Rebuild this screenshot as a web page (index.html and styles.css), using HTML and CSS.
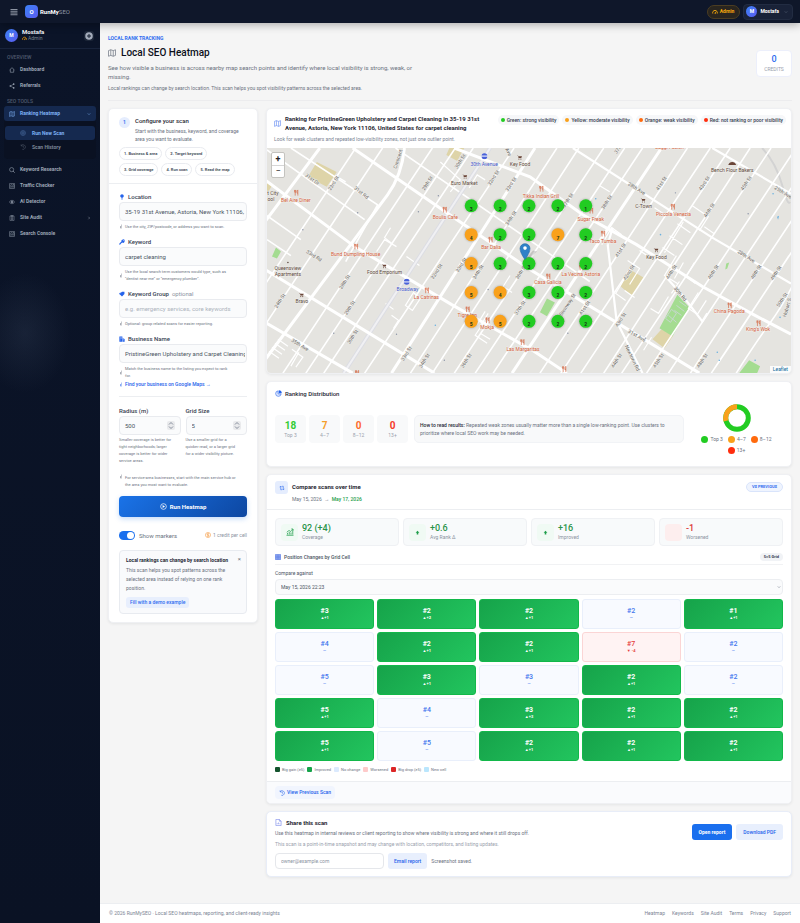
FILE: index.html
```html
<!DOCTYPE html>
<html lang="en">
<head>
<meta charset="utf-8">
<meta name="viewport" content="width=device-width, initial-scale=1">
<title>Local SEO Heatmap - RunMySEO</title>
<link rel="stylesheet" href="styles.css">
</head>
<body>
<svg class="sprite" aria-hidden="true">
  <symbol id="i-map" viewBox="0 0 16 16"><path d="M1 3.2 5.5 1.5l5 1.7L15 1.5v11.300l-4.500 1.700-5-1.700L1 14.500zM5.500 1.500v11.300M10.500 3.200v11.300" fill="none" stroke="currentColor" stroke-width="1.400" stroke-linejoin="round"/></symbol>
  <symbol id="i-home" viewBox="0 0 16 16"><path d="M1.500 8 8 1.800 14.500 8M3.500 6.500V14h9V6.500" fill="none" stroke="currentColor" stroke-width="1.500" stroke-linejoin="round"/></symbol>
  <symbol id="i-share" viewBox="0 0 16 16"><path d="M12 3 4 8l8 5" fill="none" stroke="currentColor" stroke-width="1.300"/><circle cx="12.500" cy="3" r="2.200" fill="currentColor"/><circle cx="3.500" cy="8" r="2.200" fill="currentColor"/><circle cx="12.500" cy="13" r="2.200" fill="currentColor"/></symbol>
  <symbol id="i-search" viewBox="0 0 16 16"><circle cx="7" cy="7" r="5.500" fill="none" stroke="currentColor" stroke-width="1.500"/><path d="m11 11 4 4" stroke="currentColor" stroke-width="2"/></symbol>
  <symbol id="i-chart" viewBox="0 0 16 16"><path d="M1.500 1.500h13v13h-13zM4 12V9m3 3V7m3 5V8m3 4V5M3 7l4-3 3 2 4-4" fill="none" stroke="currentColor" stroke-width="1.300"/></symbol>
  <symbol id="i-eye" viewBox="0 0 16 16"><path d="M1 8s2.500-4.500 7-4.500S15 8 15 8s-2.500 4.500-7 4.500S1 8 1 8z" fill="none" stroke="currentColor" stroke-width="1.400"/><circle cx="8" cy="8" r="2.600" fill="currentColor"/></symbol>
  <symbol id="i-clip" viewBox="0 0 16 16"><path d="M2.500 2.500h11v12h-11zM5.500 1h5v3h-5zM5 7h6M5 9.500h6M5 12h6" fill="none" stroke="currentColor" stroke-width="1.200"/></symbol>
  <symbol id="i-target" viewBox="0 0 16 16"><circle cx="8" cy="8" r="6.500" fill="none" stroke="currentColor" stroke-width="1.300"/><circle cx="8" cy="8" r="3.300" fill="none" stroke="currentColor" stroke-width="1.300"/><circle cx="8" cy="8" r="1.200" fill="currentColor"/></symbol>
  <symbol id="i-history" viewBox="0 0 16 16"><path d="M3 4.500A6.300 6.300 0 1 1 6 14M3 1v4h4M8.500 4.500V8l2.500 2" fill="none" stroke="currentColor" stroke-width="1.500"/></symbol>
  <symbol id="i-gauge" viewBox="0 0 16 16"><path d="M2 12a6.300 6.300 0 1 1 12 0" fill="none" stroke="currentColor" stroke-width="2.400"/><path d="M7 11.500 11 7l-1.800 5.500z" fill="currentColor" stroke="currentColor"/></symbol>
  <symbol id="i-chev" viewBox="0 0 16 16"><path d="m3 5.500 5 5 5-5" fill="none" stroke="currentColor" stroke-width="2"/></symbol>
  <symbol id="i-pin" viewBox="0 0 16 16"><path d="M8 .5a4.800 4.800 0 0 1 1 9.500v5.500H7V10A4.800 4.800 0 0 1 8 .5z" fill="currentColor"/></symbol>
  <symbol id="i-key" viewBox="0 0 16 16"><path d="M10.500 1a4.500 4.500 0 1 1-2 8.500L6.500 11.500H5V13H3.500v2H1v-3l5.500-5.500A4.500 4.500 0 0 1 10.500 1zm1.200 2.200a1.200 1.200 0 1 0 .1 2.400 1.200 1.200 0 0 0-.1-2.400z" fill="currentColor" fill-rule="evenodd"/></symbol>
  <symbol id="i-tag" viewBox="0 0 16 16"><path d="M8 2h6.500v6L8 14.500 1 8zM5 2 0 7l1 1.500z" fill="currentColor"/></symbol>
  <symbol id="i-build" viewBox="0 0 16 16"><path d="M1 1h8v14H1zm2 2v1.500h1.500V3zm3 0v1.500h1.500V3zM3 6.500V8h1.500V6.500zm3 0V8h1.500V6.500zM3 10v1.500h1.500V10zM10 6l5 2v7h-5zm1.500 3.500V11H13V9.500z" fill="currentColor" fill-rule="evenodd"/></symbol>
  <symbol id="i-info" viewBox="0 0 16 16"><path d="M8 1h3v3H8zM5.500 6H10l-1.500 7H11v1.500H5L6.500 7.500h-1z" fill="currentColor"/></symbol>
  <symbol id="i-play" viewBox="0 0 16 16"><circle cx="8" cy="8" r="6.500" fill="none" stroke="currentColor" stroke-width="1.600"/><path d="M6 4.800 11.500 8 6 11.200z" fill="currentColor"/></symbol>
  <symbol id="i-coin" viewBox="0 0 16 16"><circle cx="8" cy="8" r="6.800" fill="none" stroke="currentColor" stroke-width="1.500"/><path d="M10.500 5.500C9 4 5.500 4.500 5.800 6.500S10.500 8 10.300 10 6.500 11.700 5.300 10.300M8 3v10" fill="none" stroke="currentColor" stroke-width="1.500"/></symbol>
  <symbol id="i-pie" viewBox="0 0 16 16"><path d="M7 2a6.300 6.300 0 1 0 7 7H7z" fill="#dfe8fd" stroke="currentColor" stroke-width="1.300"/><path d="M8.500.5a7 7 0 0 1 7 7h-7z" fill="currentColor"/></symbol>
  <symbol id="i-swap" viewBox="0 0 16 16"><path d="M4.500 3v9.500H8M1.500 6l3-3 3 3M11.500 13V3.500H8M8.500 10l3 3 3-3" fill="none" stroke="currentColor" stroke-width="1.700"/></symbol>
  <symbol id="i-up" viewBox="0 0 16 16"><path d="M8 2 14 9h-3.500v5h-5V9H2z" fill="currentColor"/></symbol>
  <symbol id="i-grow" viewBox="0 0 16 16"><path d="M1 14.500h14M3 13v-3m3.500 3V8m3.500 5V9m3.500 4V5M1.500 8.500 6 5l3.500 2L14 2.500M10.500 2H14v3.500" fill="none" stroke="currentColor" stroke-width="1.500"/></symbol>
  <symbol id="i-grid" viewBox="0 0 16 16"><path d="M1 1h14v14H1zM1 5.700h14M1 10.300h14M5.700 1v14M10.300 1v14" fill="#a9bdf6" stroke="currentColor" stroke-width="1.500"/></symbol>
  <symbol id="i-file" viewBox="0 0 16 16"><path d="M2 1h8l4 4v10H2zM10 1v4h4M5 12V9.500m3 2.500V8m3 4v-2" fill="none" stroke="currentColor" stroke-width="1.300"/></symbol>
  <symbol id="m-food" viewBox="0 0 8 10"><path d="M1 0v3.500L2 5v5M2 0v4M3 0v3.500L2 5M6.500 10V0C5 1 5 4 5 5.500h1.500" fill="none" stroke="#d5623d" stroke-width="1.100"/></symbol>
  <symbol id="m-cart" viewBox="0 0 10 10"><path d="M0 1h2l1 5h5.500L10 2.500H2.500z" fill="#6b4638"/><circle cx="3.800" cy="8.300" r="1.100" fill="#6b4638"/><circle cx="7.800" cy="8.300" r="1.100" fill="#6b4638"/></symbol>
  <symbol id="m-sub" viewBox="0 0 10 10"><circle cx="5" cy="5" r="4.500" fill="#4a62d9"/><path d="M0 5h10" stroke="#fff" stroke-width="2.200"/><path d="M1 5h8" stroke="#4a62d9" stroke-width=".9"/></symbol>
</svg>

<header class="topbar">
  <button class="burger" type="button" aria-label="Toggle menu"><svg viewBox="0 0 16 16"><path d="M1 3h14M1 6.500h14M1 10h14M1 13.500h14" stroke="currentColor" stroke-width="1.700"/></svg></button>
  <a class="brand" href="#"><span class="logo">O</span><span><b>RunMy</b>SEO</span></a>
  <a class="admin" href="#"><svg class="ic"><use href="#i-gauge"/></svg>Admin</a>
  <button class="account" type="button"><span class="avatar">M</span><b>Mostafa</b><svg class="ic tiny"><use href="#i-chev"/></svg></button>
</header>

<div class="shell">
  <aside class="sidebar">
    <div class="user">
      <span class="avatar big">M</span>
      <div><strong>Mostafa</strong><small><svg class="ic"><use href="#i-gauge"/></svg>Admin</small></div>
      <button class="add" type="button" aria-label="Add"><svg viewBox="0 0 16 16"><circle cx="8" cy="8" r="7.500" fill="#a3abba"/><path d="M8 4v8M4 8h8" stroke="#172033" stroke-width="2"/></svg></button>
    </div>
    <nav>
      <h2>Overview</h2>
      <a class="item" href="#"><svg class="ic"><use href="#i-home"/></svg>Dashboard</a>
      <a class="item" href="#"><svg class="ic"><use href="#i-share"/></svg>Referrals</a>
      <h2>SEO Tools</h2>
      <a class="item on" href="#"><svg class="ic"><use href="#i-map"/></svg>Ranking Heatmap<svg class="ic tiny end"><use href="#i-chev"/></svg></a>
      <div class="sub">
        <a class="item on" href="#"><svg class="ic"><use href="#i-target"/></svg>Run New Scan</a>
        <a class="item" href="#"><svg class="ic"><use href="#i-history"/></svg>Scan History</a>
      </div>
      <a class="item" href="#"><svg class="ic"><use href="#i-search"/></svg>Keyword Research</a>
      <a class="item" href="#"><svg class="ic"><use href="#i-chart"/></svg>Traffic Checker</a>
      <a class="item" href="#"><svg class="ic"><use href="#i-eye"/></svg>AI Detector</a>
      <a class="item" href="#"><svg class="ic"><use href="#i-clip"/></svg>Site Audit<svg class="ic tiny end side"><use href="#i-chev"/></svg></a>
      <a class="item" href="#"><svg class="ic"><use href="#i-chart"/></svg>Search Console</a>
    </nav>
  </aside>

  <div class="page">
    <main>
      <div class="hero">
        <div class="intro">
          <p class="eyebrow">Local Rank Tracking</p>
          <h1><svg class="ic"><use href="#i-map"/></svg>Local SEO Heatmap</h1>
          <p class="lede">See how visible a business is across nearby map search points and identify where local visibility is strong, weak, or missing.</p>
          <p class="note">Local rankings can change by search location. This scan helps you spot visibility patterns across the selected area.</p>
        </div>
        <div class="credits"><strong>0</strong><span>Credits</span></div>
      </div>

      <div class="cols">
        <form class="card config">
          <div class="chead">
            <div class="step"><span class="num">1</span><div><h2>Configure your scan</h2><p>Start with the business, keyword, and coverage area you want to evaluate.</p></div></div>
            <ol class="chips"><li>1. Business &amp; area</li><li>2. Target keyword</li><li>3. Grid coverage</li><li>4. Run scan</li><li>5. Read the map</li></ol>
          </div>
          <div class="cbody">
            <div class="field">
              <label for="loc"><svg class="ic"><use href="#i-pin"/></svg>Location</label>
              <input id="loc" type="text" value="35-19 31st Avenue, Astoria, New York 11106,">
              <p class="help"><svg class="ic"><use href="#i-info"/></svg><span>Use the city, ZIP/postcode, or address you want to scan.</span></p>
            </div>
            <div class="field">
              <label for="kw"><svg class="ic"><use href="#i-key"/></svg>Keyword</label>
              <input id="kw" type="text" value="carpet cleaning">
              <p class="help"><svg class="ic"><use href="#i-info"/></svg><span>Use the local search term customers would type, such as "dentist near me" or "emergency plumber".</span></p>
            </div>
            <div class="field">
              <label for="kg"><svg class="ic"><use href="#i-tag"/></svg>Keyword Group <i>optional</i></label>
              <input id="kg" type="text" placeholder="e.g. emergency services, core keywords">
              <p class="help"><svg class="ic"><use href="#i-info"/></svg><span>Optional: group related scans for easier reporting.</span></p>
            </div>
            <div class="field last">
              <label for="bn"><svg class="ic"><use href="#i-build"/></svg>Business Name</label>
              <input id="bn" type="text" value="PristineGreen Upholstery and Carpet Cleaning">
              <p class="help"><svg class="ic"><use href="#i-info"/></svg><span>Match the business name to the listing you expect to rank for.</span></p>
              <a class="find" href="#"><svg class="ic"><use href="#i-info"/></svg>Find your business on Google Maps →</a>
            </div>
            <div class="pair">
              <div><label for="rad">Radius (m)</label>
                <div class="numbox"><input id="rad" type="number" value="500"><svg class="spin" viewBox="0 0 8 9"><path d="m2 3.500 2-2 2 2M2 5.500l2 2 2-2" fill="none" stroke="#7b8494" stroke-width=".9"/></svg></div>
                <p>Smaller coverage is better for tight neighborhoods; larger coverage is better for wider service areas.</p></div>
              <div><label for="gs">Grid Size</label>
                <div class="numbox"><input id="gs" type="number" value="5"><svg class="spin" viewBox="0 0 8 9"><path d="m2 3.500 2-2 2 2M2 5.500l2 2 2-2" fill="none" stroke="#7b8494" stroke-width=".9"/></svg></div>
                <p>Use a smaller grid for a quicker read, or a larger grid for a wider visibility picture.</p></div>
            </div>
            <p class="help area"><svg class="ic"><use href="#i-info"/></svg><span>For service-area businesses, start with the main service hub or the area you most want to evaluate.</span></p>
            <button class="run" type="button"><svg class="ic"><use href="#i-play"/></svg>Run Heatmap</button>
            <div class="opts">
              <input id="mk" type="checkbox" checked><label for="mk">Show markers</label>
              <span><svg class="ic"><use href="#i-coin"/></svg>1 credit per cell</span>
            </div>
            <div class="tip">
              <div class="tiphead"><strong>Local rankings can change by search location</strong><button type="button" aria-label="Dismiss">×</button></div>
              <p>This scan helps you spot patterns across the selected area instead of relying on one rank position.</p>
              <button class="demo" type="button">Fill with a demo example</button>
            </div>
          </div>
        </form>

        <div class="results">
          <section class="card mapcard">
            <div class="maphead">
              <div class="maptitle">
                <h2><svg class="ic"><use href="#i-map"/></svg><span>Ranking for PristineGreen Upholstery and Carpet Cleaning in 35-19 31st Avenue, Astoria, New York 11106, United States for carpet cleaning</span></h2>
                <p>Look for weak clusters and repeated low-visibility zones, not just one outlier point.</p>
              </div>
              <ul class="legend"><li><i class="g"></i>Green: strong visibility</li><li><i class="y"></i>Yellow: moderate visibility</li><li><i class="o"></i>Orange: weak visibility</li><li><i class="r"></i>Red: not ranking or poor visibility</li></ul>
            </div>
            <div class="map">
              <svg class="tiles" viewBox="266 148 526 226" preserveAspectRatio="xMidYMid slice" role="img" aria-label="Ranking map of Astoria">
                <rect x="266" y="148" width="526" height="226" fill="#e5e4e0"/>
                <g fill="#ded4a8"><path d="m316 162 20 10-10 15-19-10zM449 148h15l-7 13-11-6zM266 183l5 3-5 8zM630 270l14 8-11 19-12-10zM662 330l12 6-9 13-12-9z"/></g>
                <g fill="#a4dc91"><path d="m678 295 12 13-17 29-13-8zM547 299l8 4-8 14-7-4zM740 374l10-13 11 6-3 7zM271 257l4-9 5 4-4 7zM727 264l3-1-2 6-2 1z"/></g>
                <path d="m680 302 7 5m-10-1 8 6m-10-1 7 5m-13 0 8 7m-5-13-6 9 5 4 6-9z" stroke="#c6d7cd" fill="none"/>
                <path d="M697 148q14 15 20 37t8 17" transform="translate(66)" stroke="#d3d3d3" stroke-width="2" fill="none"/>
                <g stroke="#fff" stroke-width="1.600" fill="none">
                  <path d="M355 148 205 374M382 148 232 374M432 148 282 374M455 148 305 374M473 148 323 374M514 148 364 374M557 148 410 374M579 148 432 374M604 148 454 374M625 148 475 374M643 148 493 374M688 148 540 374M711 148 561 374M731 148 581 374M751 148 604 374M772 148 622 374M797 148 647 374M819 148 669 374M841 148 691 374M862 148 712 374M790 256 735 340 712 374M794 285Q784 306 770 325T737 374"/>
                  <path d="M290 148 377 205 345 262M266 150 364 220M395 148 590 282M266 216 300 240M266 240 290 256"/>
                  <g stroke-width="1.200"><path d="m440 162 20 18-10 12m-74 60 8-12 12 7m10 10 13 9m-90-81 6-9 10 6m124 6 8-13 8 5M390 228l-6 10 9 7m20 48-8 13 7 5 8-12zM385 304l8 6m-2 6 7 5-5 8m117-53-7 11 9 6m-29 31-8 12 12 8m138-65-9 15 10 7m43-4-10 17-8-5m33-46-9 16m24 14-10 16 9 6 9-14m-55 37-8 13m-42-106 10-17 10 7m33-27 12 8m26-10 16 11-9 14m-5 32-8 14 9 7m9-57 10 7m-87 27 12 8-10 16m-30-99 10 6m67 64-12 20 13 8m-6 10 8-12m-40-31 12 8m-27 32 10 7m43-74 13 9m-21 3 13 9m-20 3 12 8m9-34-19 31"/>
                  <path d="m268 352 10 7m-7-11 10 7m-7-11 10 7m-7-11 10 7m11 6-8 14m1-17 11 8-7 10M485 312l-8 13m11-11-8 13m0 7 10 6"/></g>
                </g>
                <path d="M490 148 343 374" stroke="#dcdde3" stroke-width="4"/><path d="M490 148 343 374" stroke="#f0f0f3" stroke-width="2"/>
                <g stroke="#fff" stroke-width="3" fill="none">
                  <path d="M319 148 264 222M404 148Q401 176 387 195L260 366M535 148 391 374M662 148 512 374M264 180 354 247 451 305 534 352 567 374M352 148 464 225 530 270 700 374M454 148 530 177 583 215 637 245 703 287 754 315 792 335M264 270 434 374M264 323 352 374"/>
                  <path stroke-width="2.200" d="M573 148 713 238 792 284M713 148 792 194M608 245 610 262 617 322 643 374M667 278 683 296 703 322 708 314M608 245 613 228"/>
                </g>
                <g fill="#8a93a6"><circle cx="302" cy="230" r=".7"/><circle cx="357" cy="213" r=".7"/><circle cx="418" cy="212" r=".7"/><circle cx="438" cy="196" r=".7"/><circle cx="333" cy="334" r=".7"/><circle cx="444" cy="361" r=".7"/><circle cx="396" cy="335" r=".7"/><circle cx="488" cy="290" r=".7"/><circle cx="568" cy="334" r=".7"/><circle cx="646" cy="339" r=".7"/><circle cx="676" cy="193" r=".7"/><circle cx="749" cy="214" r=".7"/></g>
                <g fill="#6ab1e0"><circle cx="596" cy="199" r=".8"/><circle cx="774" cy="194" r=".8"/><path d="m778 217 2-1-1 4z"/><circle cx="661" cy="235" r=".8"/><circle cx="435" cy="326" r=".8"/><circle cx="718" cy="353" r=".8"/><circle cx="756" cy="361" r=".8"/><circle cx="781" cy="318" r=".8"/><circle cx="720" cy="361" r=".8"/></g>
                <g class="street">
                  <text transform="translate(304 176) rotate(36)">31st Dr</text><text transform="translate(330 191) rotate(-58)">23rd St</text><text transform="translate(353 189) rotate(38)">31st Rd</text><text transform="translate(396 169) rotate(-72)">Crescent</text><text transform="translate(424 191) rotate(-57)">29th St</text><text transform="translate(457 169) rotate(-57)">30th St</text><text transform="translate(490 186) rotate(-57)">32nd St</text><text transform="translate(508 192) rotate(-57)">33rd St</text><text transform="translate(508 226) rotate(-57)">34th St</text><text transform="translate(505 149) rotate(65)">Ave</text><text transform="translate(565 208) rotate(-57)">37th St</text><text transform="translate(604 210) rotate(-57)">38th St</text><text transform="translate(617 154) rotate(-57)">37th</text><text transform="translate(628 185) rotate(32)">28th Ave</text><text transform="translate(659 191) rotate(-57)">41st St</text><text transform="translate(702 191) rotate(-57)">43rd St</text><text transform="translate(707 218) rotate(-57)">44th St</text><text transform="translate(744 191) rotate(-57)">45th St</text><text transform="translate(775 189) rotate(31)">25th Ave</text><text transform="translate(618 258) rotate(-57)">41st St</text>
                  <text transform="translate(305 253) rotate(32)">33rd Rd</text><text transform="translate(341 290) rotate(-57)">28th St</text><text transform="translate(346 316) rotate(-57)">29th St</text><text transform="translate(276 309) rotate(-57)">24th St</text><text transform="translate(349 345) rotate(-57)">30th St</text><text transform="translate(290 342) rotate(32)">35th Ave</text><text transform="translate(433 280) rotate(-57)">32nd St</text><text transform="translate(458 273) rotate(-57)">33rd St</text><text transform="translate(475 280) rotate(-57)">34th St</text><text transform="translate(518 280) rotate(-57)">36th St</text><text transform="translate(403 362) rotate(-57)">33rd St</text><text transform="translate(421 369) rotate(-57)">34th St</text><text transform="translate(463 369) rotate(-57)">36th St</text><text transform="translate(517 316) rotate(-57)">37th St</text><text transform="translate(562 317) rotate(-57)">Steinway St</text><text transform="translate(582 316) rotate(-57)">41st St</text><text transform="translate(626 281) rotate(-57)">42nd St</text><text transform="translate(669 280) rotate(-57)">44th St</text><text transform="translate(711 280) rotate(-57)">46th St</text><text transform="translate(754 280) rotate(-57)">48th St</text><text transform="translate(774 281) rotate(-57)">49th St</text><text transform="translate(738 253) rotate(32)">28th Ave</text><text transform="translate(674 289) rotate(50)">30th Rd</text><text transform="translate(780 308) rotate(-57)">50th St</text><text transform="translate(787 318) rotate(-74)">Hobart S</text><text transform="translate(618 328) rotate(-57)">43rd St</text><text transform="translate(628 333) rotate(30)">31st Ave</text><text transform="translate(625 347) rotate(64)">Newtown Rd</text><text transform="translate(614 369) rotate(-57)">44th St</text><text transform="translate(656 369) rotate(-57)">45th St</text><text transform="translate(700 369) rotate(-57)">48th St</text>
                </g>
                <g class="poi">
                  <use href="#m-food" x="293" y="190" width="5" height="6"/><text x="295" y="202">Bel Aire Diner</text>
                  <use href="#m-food" x="442" y="207" width="5" height="6"/><text x="445" y="219">Boulis Cafe</text>
                  <use href="#m-food" x="353" y="244" width="5" height="6"/><text x="355" y="256">Bund Dumpling House</text>
                  <use href="#m-food" x="539" y="186" width="5" height="6"/><text x="541" y="198">Tikka Indian Grill</text>
                  <use href="#m-food" x="589" y="208" width="5" height="6"/><text x="591" y="221">Sugar Freak</text>
                  <use href="#m-food" x="601" y="231" width="5" height="6"/><text x="603" y="243">Taco Tumba</text>
                  <use href="#m-food" x="671" y="204" width="5" height="6"/><text x="674" y="216">Piccola Venezia</text>
                  <use href="#m-food" x="488" y="237" width="5" height="6"/><text x="491" y="249">Bar Dalia</text>
                  <use href="#m-food" x="424" y="288" width="5" height="6"/><text x="426" y="300">La Catrinas</text>
                  <use href="#m-food" x="465" y="307" width="5" height="6"/><text x="467" y="318">Tigre Inn</text>
                  <use href="#m-food" x="485" y="318" width="5" height="6"/><text x="487" y="330">Mokja</text>
                  <use href="#m-food" x="520" y="340" width="5" height="6"/><text x="523" y="352">Las Margaritas</text>
                  <use href="#m-food" x="579" y="265" width="5" height="6"/><text x="581" y="276">La Vecina Astoria</text>
                  <use href="#m-food" x="546" y="274" width="5" height="6"/><text x="548" y="285">Casa Galicia</text>
                  <use href="#m-food" x="728" y="303" width="5" height="6"/><text x="730" y="314">China Pagoda</text>
                  <use href="#m-food" x="757" y="321" width="5" height="6"/><text x="759" y="332">King's Wok</text>
                  <use href="#m-food" x="562" y="367" width="5" height="6"/><use href="#m-food" x="354" y="371" width="5" height="6"/>
                  <text x="670" y="149">Baggi Fusion</text>
                </g>
                <g class="shop">
                  <use href="#m-cart" x="462" y="174" width="5" height="5"/><text x="464" y="185">Euro Market</text>
                  <use href="#m-cart" x="517" y="155" width="5" height="5"/><text x="520" y="166">Key Food</text>
                  <use href="#m-cart" x="381" y="264" width="5" height="5"/><text x="384" y="274">Food Emporium</text>
                  <use href="#m-cart" x="298" y="293" width="5" height="5"/><text x="301" y="304">Bravo</text>
                  <use href="#m-cart" x="641" y="198" width="5" height="5"/><text x="644" y="208">C-Town</text>
                  <use href="#m-cart" x="654" y="248" width="5" height="5"/><text x="657" y="259">Key Food</text>
                  <path d="M729 165q1-3 4-3t4 3z" fill="#6b4638"/><text x="733" y="172">Bench Flour Bakers</text>
                  <circle cx="287" cy="263" r=".8" fill="#5d4a40"/><text x="287" y="270">Queensview</text><text x="287" y="276">Apartments</text>
                  <text x="272" y="195">t City</text><text x="270" y="201">ool</text>
                </g>
                <g class="metro">
                  <use href="#m-sub" x="481" y="153" width="6.500" height="6.500"/><text x="484" y="166">30th Avenue</text>
                  <use href="#m-sub" x="403" y="279" width="6.500" height="6.500"/><text x="407" y="292">Broadway</text>
                </g>
                <g class="dots">
                  <g fill="#22cc22"><circle cx="471" cy="206" r="6.500"/><circle cx="500" cy="206" r="6.500"/><circle cx="529" cy="206" r="6.500"/><circle cx="558" cy="206" r="6.500"/><circle cx="586" cy="206" r="6.500"/><circle cx="500" cy="235" r="6.500"/><circle cx="529" cy="235" r="6.500"/><circle cx="586" cy="235" r="6.500"/><circle cx="500" cy="264" r="6.500"/><circle cx="529" cy="264" r="6.500"/><circle cx="558" cy="264" r="6.500"/><circle cx="586" cy="264" r="6.500"/><circle cx="529" cy="293" r="6.500"/><circle cx="558" cy="293" r="6.500"/><circle cx="586" cy="293" r="6.500"/><circle cx="529" cy="322" r="6.500"/><circle cx="558" cy="322" r="6.500"/><circle cx="586" cy="322" r="6.500"/></g>
                  <g fill="#f9a11b"><circle cx="471" cy="235" r="6.500"/><circle cx="558" cy="235" r="6.500"/><circle cx="471" cy="264" r="6.500"/><circle cx="471" cy="293" r="6.500"/><circle cx="500" cy="293" r="6.500"/><circle cx="471" cy="322" r="6.500"/><circle cx="500" cy="322" r="6.500"/></g>
                  <g class="vals">
                    <text x="471" y="211">3</text><text x="500" y="211">2</text><text x="529" y="211">2</text><text x="558" y="211">2</text><text x="586" y="211">1</text>
                    <text x="471" y="240">4</text><text x="500" y="240">2</text><text x="529" y="240">2</text><text x="558" y="240">7</text><text x="586" y="240">2</text>
                    <text x="471" y="269">5</text><text x="500" y="269">3</text><text x="529" y="269">3</text><text x="558" y="269">2</text><text x="586" y="269">2</text>
                    <text x="471" y="298">5</text><text x="500" y="298">4</text><text x="529" y="298">3</text><text x="558" y="298">2</text><text x="586" y="298">2</text>
                    <text x="471" y="327">5</text><text x="500" y="327">5</text><text x="529" y="327">2</text><text x="558" y="327">2</text><text x="586" y="327">2</text>
                  </g>
                </g>
                <path d="m526 259 7-8 4 1-9 8z" fill="#777" opacity=".3"/>
                <path d="M525 260q-5-7-5-11a5 5 0 0 1 10 0q0 4-5 11z" fill="#2f81c8" stroke="#2568a5" stroke-width=".6"/><circle cx="525" cy="248.500" r="1.800" fill="#fff"/>
              </svg>
              <div class="zoomer"><button type="button" aria-label="Zoom in">+</button><button type="button" aria-label="Zoom out">−</button></div>
              <a class="attr" href="#">Leaflet</a>
            </div>
          </section>

          <section class="card dist">
            <h2><svg class="ic"><use href="#i-pie"/></svg>Ranking Distribution</h2>
            <div class="distrow">
              <div class="tiles4">
                <div><strong class="tg">18</strong><span>Top 3</span></div><div><strong class="ty">7</strong><span>4–7</span></div><div><strong class="to">0</strong><span>8–12</span></div><div><strong class="tr">0</strong><span>13+</span></div>
              </div>
              <p class="read"><b>How to read results:</b> Repeated weak zones usually matter more than a single low-ranking point. Use clusters to prioritize where local SEO work may be needed.</p>
              <div class="donut">
                <svg viewBox="0 0 28 28" role="img" aria-label="18 in top 3, 7 in 4 to 7"><circle cx="14" cy="14" r="11.300" fill="none" stroke="#22cc22" stroke-width="5"/><path d="M14 2.700A11.300 11.300 0 0 0 3.060 16.810" fill="none" stroke="#f9a11b" stroke-width="5"/></svg>
                <ul><li><i class="g"></i>Top 3</li><li><i class="y"></i>4–7</li><li><i class="o"></i>8–12</li><li><i class="r"></i>13+</li></ul>
              </div>
            </div>
          </section>

          <section class="card compare">
            <div class="cmphead">
              <span class="cmpicon"><svg class="ic"><use href="#i-swap"/></svg></span>
              <div><h2>Compare scans over time</h2><p>May 15, 2026 &nbsp;→&nbsp; <b>May 17, 2026</b></p></div>
              <span class="vs">vs Previous</span>
            </div>
            <div class="cmpbody">
              <div class="kpis">
                <div><span class="kic"><svg class="ic"><use href="#i-grow"/></svg></span><p><strong>92 (+4)</strong>Coverage</p></div>
                <div><span class="kic sm"><svg class="ic"><use href="#i-up"/></svg></span><p><strong>+0.6</strong>Avg Rank Δ</p></div>
                <div><span class="kic sm"><svg class="ic"><use href="#i-up"/></svg></span><p><strong>+16</strong>Improved</p></div>
                <div class="bad"><span class="kic"></span><p><strong>-1</strong>Worsened</p></div>
              </div>
              <div class="gridhead"><h3><svg class="ic"><use href="#i-grid"/></svg>Position Changes by Grid Cell</h3><span>5×5 Grid</span></div>
              <label class="cmplabel" for="cmp">Compare against</label>
              <div class="selbox"><select id="cmp"><option>May 15, 2026 22:23</option></select><svg class="ic tiny"><use href="#i-chev"/></svg></div>
              <div class="cells">
                <div class="up"><b>#3</b><small>▲+1</small></div><div class="up"><b>#2</b><small>▲+2</small></div><div class="up"><b>#2</b><small>▲+1</small></div><div><b>#2</b><small>—</small></div><div class="up"><b>#1</b><small>▲+1</small></div>
                <div><b>#4</b><small>—</small></div><div class="up"><b>#2</b><small>▲+1</small></div><div class="up"><b>#2</b><small>▲+1</small></div><div class="down"><b>#7</b><small>▼ -4</small></div><div><b>#2</b><small>—</small></div>
                <div><b>#5</b><small>—</small></div><div class="up"><b>#3</b><small>▲+1</small></div><div><b>#3</b><small>—</small></div><div class="up"><b>#2</b><small>▲+1</small></div><div><b>#2</b><small>—</small></div>
                <div class="up"><b>#5</b><small>▲+1</small></div><div><b>#4</b><small>—</small></div><div class="up"><b>#3</b><small>▲+3</small></div><div class="up"><b>#2</b><small>▲+1</small></div><div class="up"><b>#2</b><small>▲+1</small></div>
                <div class="up"><b>#5</b><small>▲+1</small></div><div><b>#5</b><small>—</small></div><div class="up"><b>#2</b><small>▲+1</small></div><div class="up"><b>#2</b><small>▲+1</small></div><div class="up"><b>#2</b><small>▲+1</small></div>
              </div>
              <ul class="keys"><li><i class="k1"></i>Big gain (≥5)</li><li><i class="k2"></i>Improved</li><li><i class="k3"></i>No change</li><li><i class="k4"></i>Worsened</li><li><i class="k5"></i>Big drop (≥5)</li><li><i class="k6"></i>New cell</li></ul>
            </div>
            <div class="cmpfoot"><a href="#"><svg class="ic"><use href="#i-history"/></svg>View Previous Scan</a></div>
          </section>

          <section class="card share">
            <div class="sharetext">
              <h2><svg class="ic"><use href="#i-file"/></svg>Share this scan</h2>
              <p>Use this heatmap in internal reviews or client reporting to show where visibility is strong and where it still drops off.</p>
              <p class="fine">This scan is a point-in-time snapshot and may change with location, competitors, and listing updates.</p>
              <div class="mail"><input type="email" aria-label="Email address" placeholder="owner@example.com"><button class="soft" type="button">Email report</button><span>Screenshot saved.</span></div>
            </div>
            <div class="actions"><button class="solid" type="button">Open report</button><button class="soft" type="button">Download PDF</button></div>
          </section>
        </div>
      </div>
    </main>
    <footer>
      <span>© 2026 RunMySEO · Local SEO heatmaps, reporting, and client-ready insights</span>
      <nav><a href="#">Heatmap</a><a href="#">Keywords</a><a href="#">Site Audit</a><a href="#">Terms</a><a href="#">Privacy</a><a href="#">Support</a></nav>
    </footer>
  </div>
</div>
</body>
</html>
```
FILE: styles.css
```css
*{box-sizing:border-box;margin:0;padding:0}
body{font-family:Roboto,"Liberation Sans",sans-serif;font-size:5px;line-height:7px;color:#6b7280;background:#f5f5f5;min-height:100vh;display:flex;flex-direction:column}
button,input,select{font:inherit;color:inherit;border:0;background:none;min-width:0}
a{color:inherit;text-decoration:none}
ul,ol{list-style:none}
i{font-style:normal}
.sprite{position:absolute;width:0;height:0}
.ic{width:6px;height:6px;flex:none;display:block}
.ic.tiny{width:4px;height:4px}

.topbar{height:23px;flex:none;background:#0f172a;color:#fff;display:flex;align-items:center;padding:0 7px 0 10px;box-shadow:0 2px 8px rgba(0,0,0,.3);position:relative;z-index:2}
.burger{width:8px;height:8px;color:#a4abb8;margin-right:7px}
.burger svg{display:block}
.brand{display:flex;align-items:center;gap:2px;font-size:6px;color:#8d95a5;margin-right:auto}
.brand b{color:#fff}
.logo{width:13px;height:13px;border-radius:4px;background:linear-gradient(135deg,#3b82f6,#5b5cf0);color:#fff;font-weight:700;display:grid;place-items:center}
.admin{height:14px;border-radius:7px;border:1px solid #4b3d22;background:#29251f;color:#fbab0c;font-weight:700;display:flex;align-items:center;gap:2px;padding:0 5px 0 4px;margin-right:3px}
.account{height:16px;border-radius:4px;border:1px solid #222c42;background:#192238;display:flex;align-items:center;gap:3px;padding:0 4px 0 2px;color:#fff}
.account .tiny{color:#647087;margin-left:2px}
.avatar{width:11px;height:11px;border-radius:50%;background:linear-gradient(135deg,#3b82f6,#5b5cf0);color:#fff;font-size:5px;font-weight:700;display:grid;place-items:center;flex:none}
.avatar.big{width:13px;height:13px}

.shell{flex:1;display:flex}
.sidebar{width:100px;flex:none;background:radial-gradient(ellipse 45px 60px at 25px 310px,rgba(120,140,170,.12),transparent),linear-gradient(#0b1428,#0a1224);color:#9ca5b4}
.user{height:26px;display:flex;align-items:center;gap:4px;padding:0 6px 0 5px;border-bottom:1px solid #18233b}
.user strong{display:block;color:#eef1f6;font-size:6px;line-height:6px}
.user small{display:flex;align-items:center;gap:1px;font-size:5px;color:#79828f}
.user small .ic{width:5px;height:5px;color:#f59e0b}
.add{margin-left:auto;width:10px;height:10px;border-radius:3px;background:#1c2638;padding:1px}
.add svg{display:block}
.sidebar nav{padding:5px 4px}
.sidebar h2{font-size:5px;font-weight:500;text-transform:uppercase;color:#4f5a6e;padding:0 3px;height:7px;margin-bottom:1px}
.sidebar .item{height:15px;margin-bottom:1px;display:flex;align-items:center;gap:5px;padding:0 5px;font-size:5px;font-weight:700;border-radius:3px}
.sidebar .item + h2{margin-top:5px}
.sidebar .item.on{background:#15294f;color:#7fb2f5;margin-bottom:0}
.sidebar .end{margin-left:auto}
.side{transform:rotate(-90deg)}
.sub{background:#0a1122;border-radius:0 0 4px 4px;padding:5px 1px 5px;margin-bottom:3px}
.sub .item{padding:0 0 0 15px;height:14px;gap:6px;margin:0;color:#7d8798}
.sub .ic{opacity:.6}

.page{flex:1;min-width:0;display:flex;flex-direction:column}
main{padding:12px 8px 20px}
.hero{display:flex;justify-content:space-between;align-items:center;border-bottom:1px solid #ececee;padding-bottom:8px;margin-bottom:7px}
.intro{max-width:310px}
.eyebrow{color:#2f6df0;font-weight:700;text-transform:uppercase}
.hero h1{font-size:10px;line-height:14px;color:#0b0f19;font-weight:500;display:flex;align-items:center;gap:5px;margin:4px 0 3px}
.hero h1 .ic{width:8px;height:8px;color:#6b7280}
.lede{font-size:6px;line-height:9px}
.note{margin-top:4px}
.credits{background:#fff;border:1px solid #eceffb;border-radius:4px;width:36px;height:27px;display:flex;flex-direction:column;align-items:center;justify-content:center;gap:2px}
.credits strong{font-size:9px;line-height:9px;color:#2f6df0;font-weight:500}
.credits span{text-transform:uppercase;color:#9aa1ad}

.cols{display:grid;grid-template-columns:150px minmax(0,1fr);gap:8px;align-items:start}
.card{background:#fff;border:1px solid #eff0f3;border-radius:5px;box-shadow:0 1px 3px rgba(15,23,42,.07)}
.card h2{color:#1f2733;font-weight:700;font-size:6px;line-height:9px}
.results{display:flex;flex-direction:column;gap:7px}

.chead{padding:7px 10px;border-bottom:1px solid #eceef1}
.step{display:flex;gap:5px}
.num{width:11px;height:11px;border-radius:50%;background:#e5edfe;color:#3b76f0;font-weight:700;display:grid;place-items:center;flex:none;margin-top:1px}
.step p{line-height:8px;margin-top:1px}
.config .step h2{font-weight:500;line-height:10px}
.chips{display:flex;flex-wrap:wrap;gap:3px;margin-top:4px}
.chips li{border:1px solid #e9ebf0;border-radius:7px;height:13px;line-height:11px;padding:0 4px;font-size:4px;font-weight:700;color:#4b5563}
.cbody{padding:8px 10px}
.field{margin-bottom:7px}
.field label,.pair label{display:flex;align-items:center;gap:3px;font-weight:500;color:#374151;font-size:6px;height:9px;margin-bottom:1px}
.field label .ic{color:#2563eb}
.field label i{font-weight:400;color:#8b93a1}
.field input,.numbox{width:100%;height:19px;border:1px solid #e9ebef;border-radius:4px;background:#fafbfc;padding:0 1px 0 5px;font-size:6px;color:#4b5563}
.field input::placeholder{color:#adb3bd}
.help{display:flex;align-items:center;font-size:4px;line-height:7px;margin-top:2px}
.help span{max-width:105px}
.help .ic,.find .ic{width:4px;height:5px;margin-right:2px}
.find{display:flex;align-items:center;font-weight:500;color:#2563eb;margin-top:2px;height:7px}
.field.last{padding-bottom:8px;border-bottom:1px solid #eceef1;margin-bottom:9px}
.pair{display:grid;grid-template-columns:1fr 1fr;gap:5px;font-size:4px;line-height:7px}
.pair p{margin-top:1px;max-width:55px}
.numbox{display:flex;align-items:center;justify-content:space-between;padding-right:5px}
.numbox input{flex:1;width:100%;appearance:textfield}
.numbox input::-webkit-inner-spin-button{appearance:none;display:none}
.spin{width:8px;height:9px;background:#e9eaec;border-radius:2px;flex:none}
.area{margin:10px 0 8px}
.area span{max-width:111px}
.area .ic{align-self:flex-start}
.run{width:100%;height:21px;border-radius:4px;background:linear-gradient(135deg,#1a73e8,#0d47a1);color:#fff;font-weight:700;font-size:6px;display:flex;align-items:center;justify-content:center;gap:3px;box-shadow:0 2px 5px rgba(26,115,232,.25)}
.run .ic{width:7px;height:7px}
.opts{display:flex;align-items:center;gap:4px;margin:13px 0 10px;height:10px}
.opts input{appearance:none;width:16px;height:9px;border-radius:5px;background:#1a6fee;padding:1px;display:flex;justify-content:flex-end}
.opts input::before{content:"";width:7px;height:7px;border-radius:50%;background:#fff}
.opts input:not(:checked){background:#c3c9d3;justify-content:flex-start}
.opts label{font-size:6px}
.opts span{margin-left:auto;display:flex;align-items:center;gap:2px;color:#8b93a1}
.opts .ic{color:#f5963b}
.tip{border:1px solid #e8ebf0;border-radius:4px;background:#f9fafc;padding:5px 5px 5px 6px;line-height:9px}
.tiphead{display:flex;justify-content:space-between;align-items:flex-start;color:#1f2937}
.tiphead strong{font-weight:700}
.tiphead button{line-height:5px;font-size:6px;color:#6b7280}
.tip p{margin:1px 0 4px}
.demo{background:#e8effd;color:#2f6df0;font-weight:500;border-radius:3px;height:11px;padding:0 4px}

.maphead{display:flex;gap:4px;justify-content:space-between;align-items:flex-start;padding:5px 5px 5px 7px}
.mapcard{overflow:hidden}
.maptitle{flex:1}
.maptitle h2{display:flex;align-items:center;gap:4px}
.maptitle .ic{color:#5c86f2;width:7px;height:7px}
.maptitle p{margin-top:3px;line-height:8px;color:#7b8494}
.legend{display:flex;gap:3px;flex:none}
.legend li{background:#f6f7f9;border-radius:5px;height:10px;margin-top:1px;display:flex;align-items:center;gap:2px;padding:0 3px;font-weight:500;color:#374151}
.legend i{width:4px;height:4px;border-radius:50%}
.g{background:#22cc22}.y{background:#f9a11b}.o{background:#ff6a0d}.r{background:#ff2d0d}
.map{position:relative}
.tiles{display:block;width:100%;height:auto}
.tiles text{font-size:5px;text-anchor:middle;paint-order:stroke;stroke:#efeeea;stroke-width:1px}
.tiles .street text{text-anchor:start;fill:#6a6865}
.poi{fill:#d5623d}.shop{fill:#5d4a40}.metro{fill:#4458cc}
.tiles .vals text{font-weight:700;fill:#173517;stroke:none}
.dots circle{filter:drop-shadow(0 0 1px rgba(0,0,0,.3))}
.zoomer{position:absolute;left:4px;top:4px;border:1px solid #c4c3bf;border-radius:2px;background:#fff;display:grid}
.zoomer button{width:12px;height:12px;font-size:9px;line-height:11px;font-weight:700;color:#222}
.zoomer button + button{border-top:1px solid #d6d6d6;font-weight:400}
.attr{position:absolute;right:0;bottom:0;background:rgba(255,255,255,.85);color:#0e6b9c;padding:0 3px;line-height:7px}

.dist{padding:7px 8px 8px}
.card.dist h2,.gridhead h3{font-weight:500;display:flex;align-items:center;gap:3px}
.dist h2 .ic{color:#2563eb;width:7px;height:7px}
.distrow{display:flex;align-items:center;gap:6px;height:58px;margin-top:2px}
.tiles4{display:flex;gap:3px}
.tiles4 div{width:31px;height:28px;border-radius:4px;background:#f8f9fa;display:flex;flex-direction:column;align-items:center;justify-content:center;gap:1px;color:#9aa1ad}
.tiles4 strong{font-size:10px;line-height:11px}
.tg{color:#33cc33}.ty{color:#f59e2b}.to{color:#ff6a2b}.tr{color:#f5392b}
.read{flex:1;background:#f8f9fa;border:1px solid #f1f3f6;border-radius:5px;padding:5px 5px;line-height:8px}
.read b{color:#1f2937;font-weight:500}
.donut{width:93px;display:flex;flex-direction:column;align-items:center;gap:3px}
.donut svg{width:28px;height:28px}
.donut ul{display:flex;flex-wrap:wrap;justify-content:center;gap:3px 5px;width:80px}
.donut li{display:flex;align-items:center;gap:2px;line-height:8px}
.donut i{width:7px;height:7px;border-radius:50%}

.compare{overflow:hidden}
.cmphead{display:flex;align-items:flex-start;gap:4px;padding:6px 8px 4px;border-bottom:1px solid #eceef1}
.cmpicon{width:13px;height:13px;border-radius:3px;background:#e5edfe;color:#3b76f0;display:grid;place-items:center}
.cmphead h2{line-height:12px}
.cmphead p{line-height:12px}
.cmphead p b{color:#1e9e4a;font-weight:500}
.vs{margin-left:auto;margin-top:1px;border:1px solid #d9e4fb;background:#eff4fe;border-radius:6px;color:#2f6df0;font-size:4px;font-weight:700;text-transform:uppercase;padding:0 5px;height:10px;line-height:8px}
.cmpbody{padding:8px 8px 8px}
.kpis{display:grid;grid-template-columns:repeat(4,1fr);gap:4px}
.kpis div{height:28px;background:#f8fafb;border:1px solid #eff1f4;border-radius:4px;display:flex;align-items:center;gap:4px;padding:0 5px}
.kic{width:17px;height:17px;border-radius:4px;background:#f0faf4;color:#1e9e4a;display:grid;place-items:center}
.kic .ic{width:8px;height:8px}.kic.sm .ic{width:5px;height:5px}
.kpis p{color:#8b93a1;line-height:7px}
.kpis strong{display:block;font-size:9px;line-height:11px;color:#2a9449;font-weight:500}
.bad .kic{background:#fdeeee}.kpis .bad strong{color:#dc3636}
.gridhead{display:flex;justify-content:space-between;align-items:center;border-bottom:1px solid #f1f2f4;padding:6px 0 2px;height:19px}
.gridhead h3{font-size:5px;color:#4b5563}
.gridhead .ic{color:#4a6fe0}
.gridhead span{background:#f1f3f6;border-radius:4px;font-size:4px;font-weight:700;color:#374151;padding:0 4px;line-height:8px}
.cmplabel{display:block;margin:5px 0 2px;height:7px;color:#4b5563}
.selbox{position:relative;margin-bottom:4px}
.selbox select{appearance:none;width:100%;height:16px;border:1px solid #eceef1;border-radius:4px;background:#fafbfc;padding:0 5px;color:#4b5563}
.selbox .ic{position:absolute;right:2px;top:6px}
.cells{display:grid;grid-template-columns:repeat(5,1fr);grid-auto-rows:30px;gap:3px}
.cells div{border:1px solid #e9effb;border-radius:3px;background:#f8faff;color:#4477ee;display:flex;flex-direction:column;align-items:center;justify-content:center}
.cells b{font-size:7px;line-height:8px;font-weight:500}
.cells small{font-size:4px;line-height:6px;font-weight:700}
.cells .up{background:linear-gradient(135deg,#16a34a,#22c55e);border-color:#12b84a;color:#fff}
.cells .up b{font-weight:700}
.cells .down{background:#fff3f3;border-color:#fbd5d5;color:#e53e3e}
.keys{display:flex;gap:3px;margin-top:5px;font-size:4px}
.keys li{display:flex;align-items:center;gap:2px}
.keys i{width:5px;height:5px;border-radius:1px}
.k1{background:#14532d}.k2{background:#16a34a}.k3{background:#dbeafe}.k4{background:#fecaca}.k5{background:#dc2626}.k6{background:#bae6fd}
.cmpfoot{border-top:1px solid #eceef1;background:#fafbfd;padding:4px 8px}
.cmpfoot a{display:inline-flex;align-items:center;gap:2px;background:#f1f5fe;border-radius:4px;color:#2563eb;font-weight:500;height:13px;padding:0 4px;vertical-align:top}

.share{display:flex;align-items:flex-start;justify-content:space-between;padding:6px 8px 7px;border-color:#e8edf8}
.share h2{display:flex;align-items:center;gap:4px}
.share h2 .ic{color:#6f7fe8;width:7px;height:7px}
.share p{line-height:8px;margin-top:2px}
.share .fine{color:#9aa1ad;margin-top:3px}
.mail{display:flex;align-items:center;gap:4px;margin-top:5px}
.mail input{width:109px;height:16px;border:1px solid #e5e7eb;border-radius:4px;background:#fff;padding:0 5px}
.mail input::placeholder{color:#8b93a1}
.soft,.solid{height:16px;border-radius:3px;padding:0 6px;font-weight:500;background:#e8effd;color:#2563eb}
.solid{background:#1a6fee;color:#fff;font-weight:700}
.actions{display:flex;gap:4px;margin-top:6px}
.actions button{padding:0 7px}

footer{margin-top:auto;background:#fff;border-top:1px solid #eceef1;min-height:20px;padding:0 9px;display:flex;align-items:center;justify-content:space-between;color:#7b8494}
footer nav{display:flex;gap:7px}
```
